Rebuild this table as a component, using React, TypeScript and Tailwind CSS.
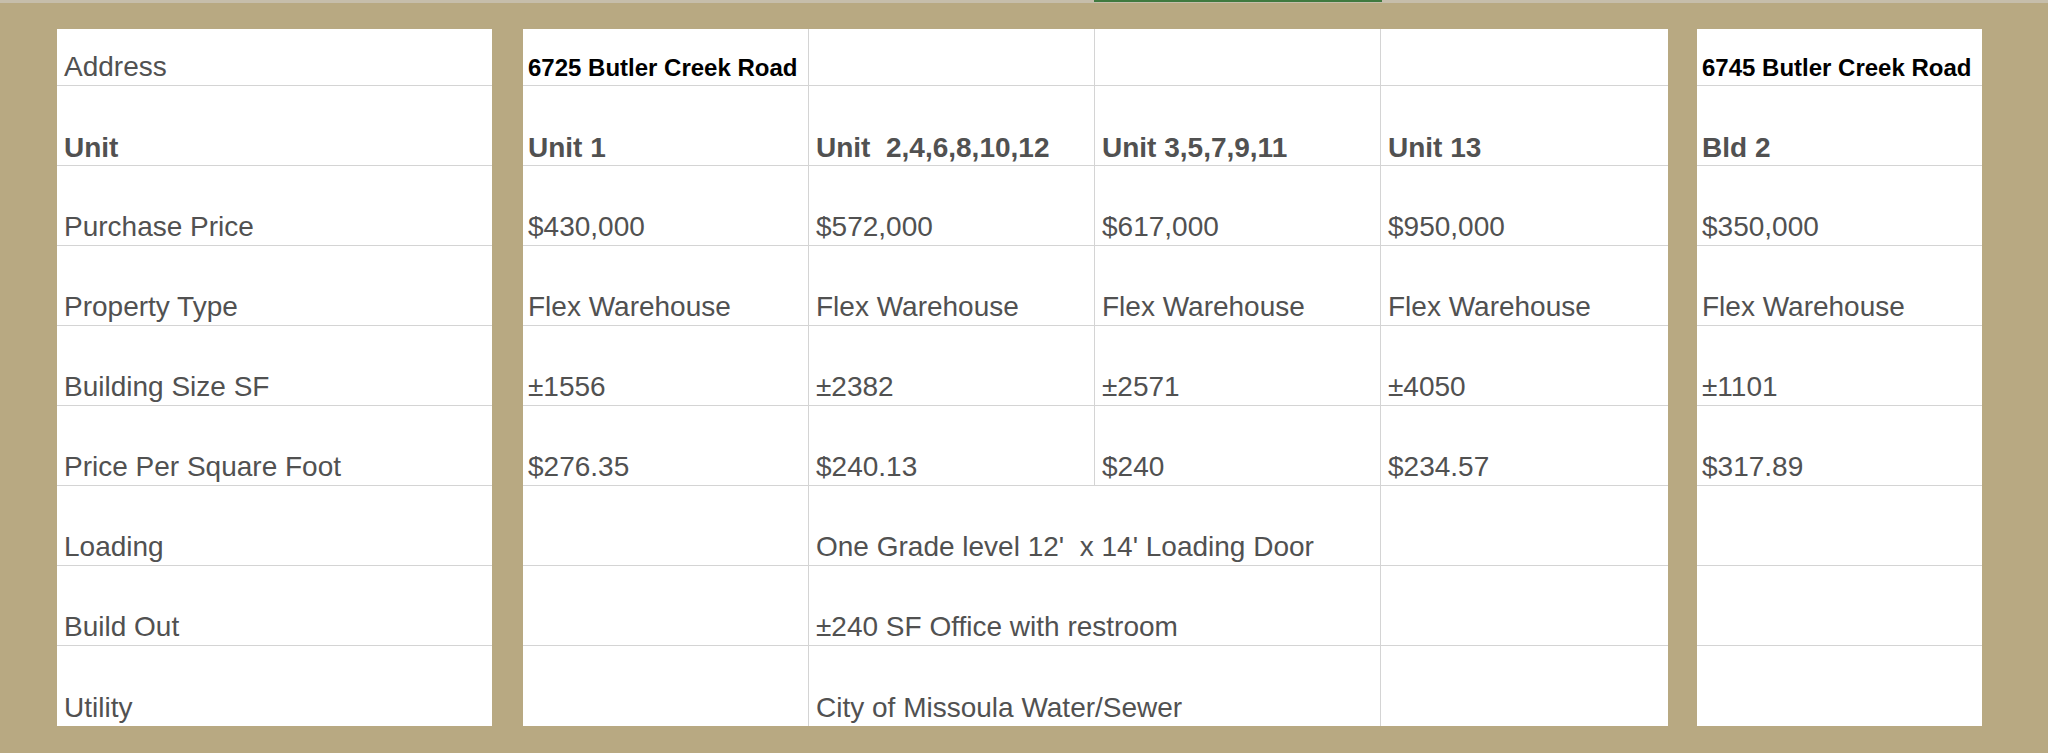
import React from "react";

const font = { fontFamily: '"Liberation Sans", Arial, sans-serif' };

type Cell = { text: string; kind?: "addr" | "unit" | "reg"; span?: number };

const ROW_H = ["h-[57px]", "h-[80px]", "h-[80px]", "h-[80px]", "h-[80px]", "h-[80px]", "h-[80px]", "h-[80px]", "h-[80px]"];

function CellBox({ cell, rowIdx, last, leftBorder, first }: { cell: Cell; rowIdx: number; last: boolean; leftBorder: boolean; first: boolean }) {
  const kind = cell.kind ?? "reg";
  const textCls =
    kind === "addr"
      ? "text-[24px] leading-[24px] font-bold text-black pb-[5px]"
      : kind === "unit"
      ? "text-[28px] leading-[28px] font-bold text-[#515151] pb-[3px]"
      : "text-[28px] leading-[28px] text-[#515151] pb-[4px]";
  return (
    <div
      className={`${ROW_H[rowIdx]} flex items-end whitespace-pre overflow-visible ${first ? "pl-[5px]" : "pl-[7px]"} ${
        last ? "" : "border-b border-[#d4d4d4]"
      } ${leftBorder ? "border-l border-[#d4d4d4]" : ""} ${textCls}`}
      style={cell.span ? { gridColumn: `span ${cell.span} / span ${cell.span}` } : undefined}
    >
      {cell.text}
    </div>
  );
}

const labels: Cell[] = [
  { text: "Address" },
  { text: "Unit", kind: "unit" },
  { text: "Purchase Price" },
  { text: "Property Type" },
  { text: "Building Size SF" },
  { text: "Price Per Square Foot" },
  { text: "Loading" },
  { text: "Build Out" },
  { text: "Utility" },
];

const mainRows: Cell[][] = [
  [{ text: "6725 Butler Creek Road", kind: "addr" }, { text: "" }, { text: "" }, { text: "" }],
  [
    { text: "Unit 1", kind: "unit" },
    { text: "Unit  2,4,6,8,10,12", kind: "unit" },
    { text: "Unit 3,5,7,9,11", kind: "unit" },
    { text: "Unit 13", kind: "unit" },
  ],
  [{ text: "$430,000" }, { text: "$572,000" }, { text: "$617,000" }, { text: "$950,000" }],
  [{ text: "Flex Warehouse" }, { text: "Flex Warehouse" }, { text: "Flex Warehouse" }, { text: "Flex Warehouse" }],
  [{ text: "±1556" }, { text: "±2382" }, { text: "±2571" }, { text: "±4050" }],
  [{ text: "$276.35" }, { text: "$240.13" }, { text: "$240" }, { text: "$234.57" }],
  [{ text: "" }, { text: "One Grade level 12'  x 14' Loading Door", span: 2 }, { text: "" }],
  [{ text: "" }, { text: "±240 SF Office with restroom", span: 2 }, { text: "" }],
  [{ text: "" }, { text: "City of Missoula Water/Sewer", span: 2 }, { text: "" }],
];

const bldRows: Cell[] = [
  { text: "6745 Butler Creek Road", kind: "addr" },
  { text: "Bld 2", kind: "unit" },
  { text: "$350,000" },
  { text: "Flex Warehouse" },
  { text: "±1101" },
  { text: "$317.89" },
  { text: "" },
  { text: "" },
  { text: "" },
];

export default function App() {
  return (
    <div className="w-[2048px] h-[753px] bg-[#b8a982] overflow-hidden" style={font}>
      <div className="relative h-[3px] bg-[#c6beab]">
        <div className="absolute left-[1094px] top-0 w-[288px] h-[2px] bg-[#3f7a3f]" />
      </div>
      <div className="flex pt-[26px] pl-[57px]">
        <div className="w-[435px] bg-white flex flex-col">
          {labels.map((c, i) => (
            <CellBox key={i} cell={c} rowIdx={i} last={i === labels.length - 1} leftBorder={false} first={false} />
          ))}
        </div>
        <div className="ml-[31px] w-[1145px] bg-white grid grid-cols-[285px_286px_286px_288px]">
          {mainRows.map((row, ri) => {
            let col = 0;
            return row.map((c, ci) => {
              const thisCol = col;
              col += c.span ?? 1;
              return (
                <CellBox
                  key={`${ri}-${ci}`}
                  cell={c}
                  rowIdx={ri}
                  last={ri === mainRows.length - 1}
                  leftBorder={thisCol > 0}
                  first={thisCol === 0}
                />
              );
            });
          })}
        </div>
        <div className="ml-[29px] w-[285px] bg-white flex flex-col">
          {bldRows.map((c, i) => (
            <CellBox key={i} cell={c} rowIdx={i} last={i === bldRows.length - 1} leftBorder={false} first={true} />
          ))}
        </div>
      </div>
    </div>
  );
}
